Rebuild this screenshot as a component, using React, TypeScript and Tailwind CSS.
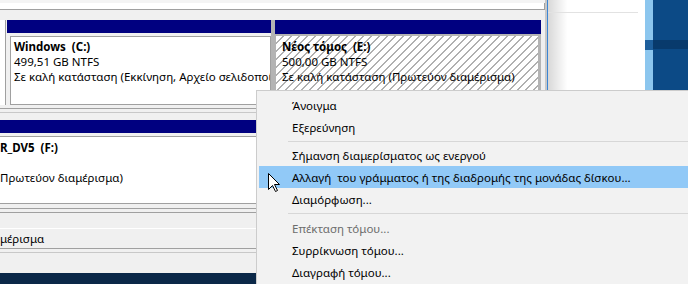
import React from "react";

function Cursor() {
  return (
    <svg width="13" height="20" viewBox="0 0 13 20" className="absolute left-[268px] top-[173px]">
      <path
        d="M0.5 0.5 L0.5 16.5 L4.5 12.5 L7.5 18.5 L9.5 17.5 L6.5 11.5 L11.5 11.5 Z"
        fill="#fff"
        stroke="#000"
        strokeWidth="1"
        strokeLinejoin="miter"
      />
    </svg>
  );
}

function MenuItem({ label, active, disabled }: { label: string; active?: boolean; disabled?: boolean }) {
  return (
    <div
      className={
        "h-[22px] mx-[2px] flex items-center pl-[33px] whitespace-pre " +
        (active ? "bg-[#91c9f7] " : "") +
        (disabled ? "text-[#6d6d6d]" : "text-black")
      }
    >
      {label}
    </div>
  );
}

function Sep({ h }: { h: string }) {
  return (
    <div className={"flex items-center pl-[31px] " + h}>
      <div className="h-px flex-1 bg-[#d7d7d7]" />
    </div>
  );
}

export default function App() {
  return (
    <div className="relative w-[688px] h-[284px] overflow-hidden bg-[#f0f0f0] text-[11.5px] leading-[15px] text-black font-['Noto_Sans',sans-serif]">
      <div className="flex h-full">
        {/* Disk management content */}
        <div className="flex flex-col w-[545px] h-full">
          <div className="h-[3px] bg-[#f4f4f4]" />
          <div className="h-[7px] bg-white border-b border-r border-[#a0a0a0]" />
          <div className="h-[10px]" />
          {/* Disk 0 row */}
          <div className="flex h-[85px]">
            <div className="w-[6px] bg-white border-r border-[#a0a0a0]" />
            <div className="w-px" />
            {/* Partition C */}
            <div className="flex flex-col w-[264px]">
              <div className="h-[13px] bg-[#000080]" />
              <div className="flex-1 pt-[3px] pl-[3px]">
                <div className="h-full bg-white border border-[#a0a0a0] pl-[3px] pt-[2px] overflow-hidden whitespace-pre">
                  <div className="font-bold">Windows  (C:)</div>
                  <div>499,51 GB NTFS</div>
                  <div>Σε καλή κατάσταση (Εκκίνηση, Αρχείο σελιδοποίησης, Ένδειξη σφάλματος)</div>
                </div>
              </div>
            </div>
            {/* Partition E (selected) */}
            <div className="flex flex-col w-[270px] bg-[#b4b4b4]">
              <div className="h-[14px] ml-[4px] bg-[#000080]" />
              <div className="flex-1 pt-[2px] pl-[5px] pr-[3px]">
                <div className="h-full bg-white bg-[repeating-linear-gradient(135deg,#ffffff_0px,#ffffff_4.6px,#b0b0b0_4.6px,#b0b0b0_5.66px)] pl-[6px] pt-[3px] overflow-hidden whitespace-pre">
                  <div className="font-bold">Νέος τόμος  (E:)</div>
                  <div>500,00 GB NTFS</div>
                  <div>Σε καλή κατάσταση (Πρωτεύον διαμέρισμα)</div>
                </div>
              </div>
            </div>
          </div>
          <div className="h-[3px]" />
          <div className="h-px bg-[#a0a0a0]" />
          <div className="h-[3px]" />
          <div className="h-px bg-[#c8c8c8]" />
          <div className="h-[7px]" />
          {/* CD row */}
          <div className="h-[13px] bg-[#000080]" />
          <div className="h-[3px]" />
          <div className="h-[68px] bg-white border-y border-[#a0a0a0] overflow-hidden whitespace-pre pt-[3px]">
            <div className="font-bold">R_DV5  (F:)</div>
            <div> </div>
            <div>Πρωτεύον διαμέρισμα)</div>
          </div>
          <div className="h-[4px]" />
          <div className="h-px bg-[#a0a0a0]" />
          <div className="h-[3px]" />
          <div className="h-px bg-[#a0a0a0]" />
          <div className="h-[15px]" />
          <div className="h-px bg-white" />
          <div className="h-[19px] flex items-center whitespace-nowrap">μέρισμα</div>
          <div className="h-px bg-[#a0a0a0]" />
          <div className="h-[3px]" />
          <div className="h-px bg-[#c8c8c8]" />
          <div className="flex-1" />
          <div className="h-[11px] bg-[#0b2848]" />
        </div>
        <div className="w-[2px] bg-[#c8c8c8]" />
        <div className="w-px bg-[#3c86d4]" />
        {/* Other window + desktop */}
        <div className="flex-1 flex flex-col">
          <div className="h-[90px] flex">
            <div className="w-[97px] bg-gradient-to-r from-[#d8d8d8] via-white via-[20%] to-white flex flex-col">
              <div className="h-[12px]" />
              <div className="h-px w-[90px] bg-[#e2e2e2]" />
            </div>
            <div className="w-[8px] bg-[#8cc6ee] flex flex-col">
              <div className="h-[40px]" />
              <div className="h-[10px] bg-[#1e5f9c]" />
            </div>
            <div className="flex-1 bg-[#0c4a86] flex flex-col">
              <div className="h-[40px]" />
              <div className="h-[9px] bg-[#083a6c]" />
            </div>
          </div>
          <div className="flex-1" />
        </div>
      </div>

      {/* Context menu */}
      <div className="absolute left-[256px] top-[90px] w-[440px] h-[200px] bg-[#f2f2f2] border border-[#cccccc] pt-[3px]">
        <MenuItem label="Άνοιγμα" />
        <MenuItem label="Εξερεύνηση" />
        <Sep h="h-[6px]" />
        <MenuItem label="Σήμανση διαμερίσματος ως ενεργού" />
        <MenuItem label="Αλλαγή  του γράμματος ή της διαδρομής της μονάδας δίσκου..." active />
        <MenuItem label="Διαμόρφωση..." />
        <Sep h="h-[7px]" />
        <MenuItem label="Επέκταση τόμου..." disabled />
        <MenuItem label="Συρρίκνωση τόμου..." />
        <MenuItem label="Διαγραφή τόμου..." />
      </div>
      <Cursor />
    </div>
  );
}
